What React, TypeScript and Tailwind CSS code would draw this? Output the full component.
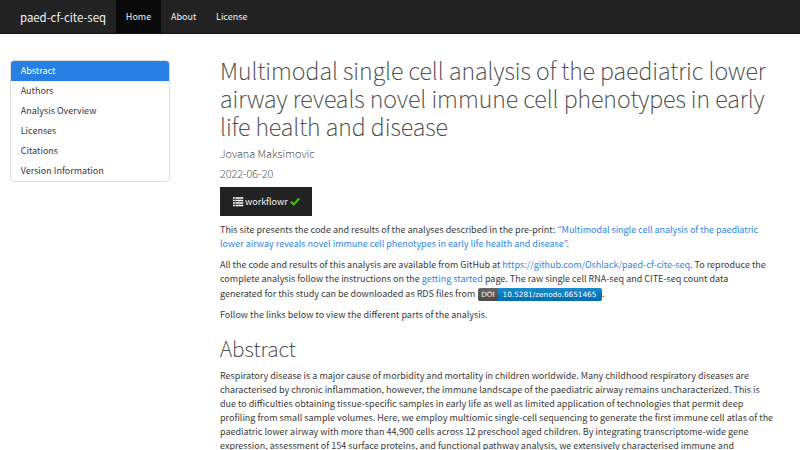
import React from "react";

const toc = ["Authors", "Analysis Overview", "Licenses", "Citations", "Version Information"];

function Line({ children, className = "" }: { children: React.ReactNode; className?: string }) {
  return <span className={`block w-max whitespace-nowrap ${className}`}>{children}</span>;
}

function Link({ children }: { children: React.ReactNode }) {
  return <a href="#" className="text-[#2f86e5]">{children}</a>;
}

export default function App() {
  return (
    <div className="h-[450px] w-[800px] overflow-hidden bg-white font-['Noto_Sans_CJK_KR',sans-serif] text-[9px] leading-[14px] text-[#3a3a3a]">
      <nav className="flex h-[34px] items-center border-b border-[#121212] bg-[#222] text-[#f4f4f4]">
        <a href="#" className="w-[116px] pl-5 text-[11.4px]">paed-cf-cite-seq</a>
        <a href="#" className="flex h-[33px] w-[45px] items-center justify-center bg-[#090909]">Home</a>
        <a href="#" className="ml-[10px] w-[26px]">About</a>
        <a href="#" className="ml-[19px]">License</a>
      </nav>
      <div className="flex pt-[26px]">
        <aside className="ml-[10px] h-[122px] w-40 shrink-0 overflow-hidden rounded-[4px] border border-[#ddd]">
          <a href="#" className="block h-5 bg-[#2780e3] pl-[9.7px] leading-5 text-white">Abstract</a>
          {toc.map((t) => (
            <a key={t} href="#" className="block h-5 pl-[9.7px] leading-5">{t}</a>
          ))}
        </aside>
        <main className="ml-[50px] w-[560px]">
          <h1 className="-mt-[4px] text-[23.4px] leading-[28px] font-thin [-webkit-text-stroke:0.2px_#3a3a3a]">
            <Line>Multimodal single cell analysis of the paediatric lower</Line>
            <Line className="-mt-[0.5px]">airway reveals novel immune cell phenotypes in early</Line>
            <Line>life health and disease</Line>
          </h1>
          <h4 className="mt-[3.5px] text-[11.05px] leading-5 font-thin [-webkit-text-stroke:0.1px_#3a3a3a]">Jovana Maksimovic</h4>
          <h4 className="text-[11.05px] leading-5 font-thin [-webkit-text-stroke:0.1px_#3a3a3a]">2022-06-20</h4>
          <button className="mt-[4px] flex h-[29px] w-[92px] items-center bg-[#222] pt-px pl-[12.5px] text-[#f4f4f4]">
            <svg width="11" height="10" viewBox="0 0 11 10" fill="#fff" className="-mt-px mr-[1.5px] shrink-0">
              <path d="M0 .2h1.8v1.6H0zM2.4.2h7.9v1.6H2.4zM0 2.7h1.8v1.6H0zM2.4 2.7h7.9v1.6H2.4zM0 5.2h1.8v1.6H0zM2.4 5.2h7.9v1.6H2.4zM0 7.7h1.8v1.6H0zM2.4 7.7h7.9v1.6H2.4z" />
            </svg>
            <span>workflowr</span>
            <svg width="11" height="10" viewBox="0 0 11 10" className="-mt-px ml-[2px] shrink-0">
              <path d="M0 5.6 1.7 3.9 3.7 5.7 8.3.7 10 2.3 3.8 9.1z" fill="#3fb618" />
            </svg>
          </button>
          <p className="mt-[7px]">
            <Line>This site presents the code and results of the analyses described in the pre-print: <Link><span className="tracking-[-0.03px]">“Multimodal single cell analysis of the paediatric</span></Link></Line>
            <Line><Link>lower airway reveals novel immune cell phenotypes in early life health and disease”</Link>.</Line>
          </p>
          <p className="mt-[7px]">
            <Line>All the code and results of this analysis are available from GitHub at <Link>https://github.com/Oshlack/paed-cf-cite-seq</Link>. To reproduce the</Line>
            <Line>complete analysis follow the instructions on the <Link>getting started</Link> page. The raw single cell RNA-seq and CITE-seq count data</Line>
            <span className="flex h-[15px] items-center whitespace-nowrap">
              <span className="w-[258px]">generated for this study can be downloaded as RDS files from</span>
              <span className="mt-px flex h-[13px] w-[124px] overflow-hidden rounded-[2px] font-['DejaVu_Sans',sans-serif] text-[7.3px] leading-[13px] text-white">
                <span className="w-5 bg-[#555] bg-linear-to-b from-white/10 to-black/10 text-center">DOI</span>
                <span className="flex-1 bg-[#007ec6] bg-linear-to-b from-white/10 to-black/10 pr-px text-center">10.5281/zenodo.6651465</span>
              </span>
              .
            </span>
          </p>
          <p className="mt-[7px]">Follow the links below to view the different parts of the analysis.</p>
          <h2 className="mt-[12px] text-[21.1px] leading-7 font-thin [-webkit-text-stroke:0.2px_#3a3a3a]">Abstract</h2>
          <p className="mt-[7px]">
            <Line>Respiratory disease is a major cause of morbidity and mortality in children worldwide. Many childhood respiratory diseases are</Line>
            <Line>characterised by chronic inflammation, however, the immune landscape of the paediatric airway remains uncharacterized. This is</Line>
            <Line>due to difficulties obtaining tissue-specific samples in early life as well as limited application of technologies that permit deep</Line>
            <Line>profiling from small sample volumes. Here, we employ multiomic single-cell sequencing to generate the first immune cell atlas of the</Line>
            <Line>paediatric lower airway with more than 44,900 cells across 12 preschool aged children. By integrating transcriptome-wide gene</Line>
            <Line>expression, assessment of 154 surface proteins, and functional pathway analysis, we extensively characterised immune and</Line>
          </p>
        </main>
      </div>
    </div>
  );
}
